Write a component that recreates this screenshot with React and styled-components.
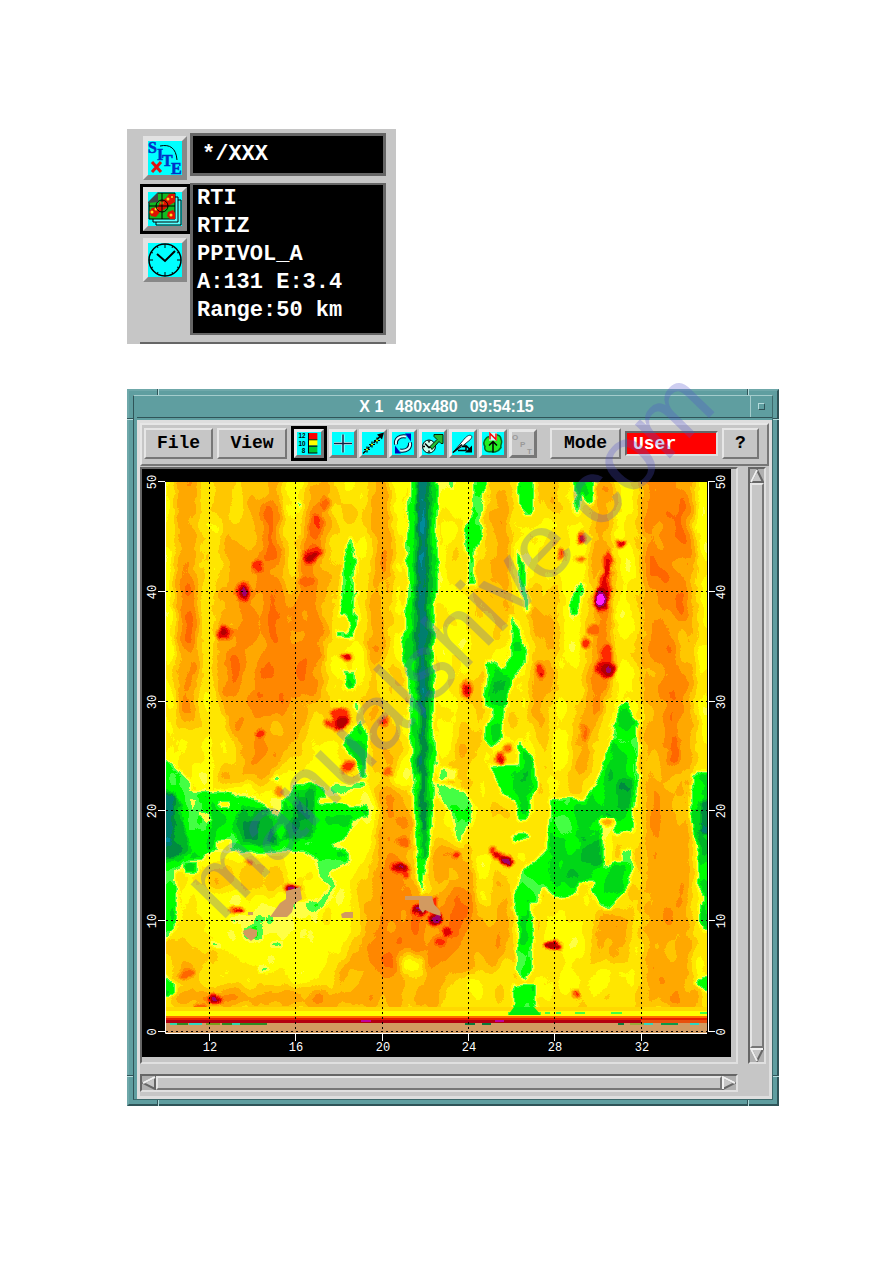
import styled, { createGlobalStyle, css } from 'styled-components';
import { useState } from 'react';

const MONO = '"Liberation Mono", "Courier New", monospace';
const SANS = '"Liberation Sans", Arial, sans-serif';

// radar palette, weakest echo first
const PALETTE = [
    '#008c9c', '#007f70', '#008c40', '#00b428', '#00d818', '#00ff00', '#44ff44',
    '#ffff44', '#ffff00', '#ffe600', '#ffc800', '#ffa800', '#ff8800', '#ff6600',
    '#ff2800', '#e00000', '#b40000', '#a00070', '#ff20ff'
];

const level = (i) => {
    const grey = Math.round((i + 0.5) * 255 / PALETTE.length);
    return `rgb(${grey},${grey},${grey})`;
}

const channel = (offset) => PALETTE.map(c => (parseInt(c.slice(offset, offset + 2), 16) / 255).toFixed(3)).join(' ');

const BANDS = [
    [8, 'M160 470H174V780H160Z'],
    [11, 'M176 470H197L198 620L192 730H180L174 620Z'],
    [12, 'M183 470H194L190 510L192 600H183Z'],
    [12, 'M180 605H198V690H184Z'],
    [9, 'M200 470H214L216 700H200Z'],
    [10, 'M216 470H262V580H216Z'],
    [8, 'M208 520H220V590H206Z'],
    [8, 'M229 500H243V522H229Z'],
    [11, 'M218 580L255 535L268 480H282L284 560L290 600L308 560V480H330L345 560L335 640L322 700L290 745L268 785L250 790L220 780L240 750L215 690Z'],
    [12, 'M266 470H282L280 530L276 600L296 680L285 712L262 720L250 650L230 720L225 650L245 600L262 560Z'],
    [12, 'M306 510L318 500L322 580L322 640L310 690L292 712L286 640L296 590Z'],
    [13, 'M266 505H276L278 560H266Z'],
    [13, 'M231 668H240V690H234ZM256 660H264V700H256Z'],
    [8, 'M285 470H302L298 540H288Z'],
    [9, 'M331 485H364V640L352 720H330Z'],
    [8, 'M325 640H362V675H325Z'],
    [11, 'M368 470H390L391 600L386 660H368Z'],
    [8, 'M393 470H405L402 640L406 700L410 780L402 830H388L398 700Z'],
    [10, 'M368 660H400V760L386 780H370Z'],
    [8, 'M438 470H470V690L450 760H438Z'],
    [10, 'M452 540H464V590H446ZM460 680H476V790H462Z'],
    [11, 'M492 470H512L508 550L512 610L498 640L486 600Z'],
    [8, 'M515 530H540V680L530 740H520L512 640Z'],
    [10, 'M530 580H566L560 680L546 770L530 720Z'],
    [11, 'M540 470H556V510H542Z'],
    [11, 'M530 600H555V680L545 720H528L535 650Z'],
    [8, 'M560 490H585L590 560L580 640L565 760L545 790L560 640Z'],
    [11, 'M594 480H614L612 650L602 700L590 770L570 780L578 720L592 640Z'],
    [12, 'M598 600H612V690L596 720Z'],
    [8, 'M616 470H634V530L630 640L632 700L612 700L618 640Z'],
    [11, 'M640 470H696L694 700L690 1005H640L645 840L642 700Z'],
    [12, 'M650 470H692L690 560L684 620L656 640L644 560Z'],
    [12, 'M664 640H678L680 720L676 770H668L660 720Z'],
    [8, 'M698 470H712V760H698Z'],
    [8, 'M190 760H240L268 795L330 740L345 780L375 800L380 840L350 880L340 940L310 985L230 960L180 900L176 850Z'],
    [10, 'M215 755L240 765L262 785H228Z'],
    [11, 'M222 768H248V782H222Z'],
    [7, 'M245 910H320V935H220Z'],
    [10, 'M200 865H285V890H205Z'],
    [11, 'M380 785L410 790L414 850L424 895L440 840L468 860L505 880L512 920L508 960L470 975L420 995H340L335 975L365 940L375 860Z'],
    [12, 'M385 850L408 862L414 900L450 905L462 870L478 880L470 930L440 960L395 975L370 970L380 910Z'],
    [8, 'M400 955H425V975H400Z'],
    [8, 'M472 855H495V905H478Z'],
    [9, 'M545 905H620L640 940L620 990H545Z'],
    [8, 'M545 912H590L600 940L580 950H545ZM560 970H645L640 990H560Z'],
    [11, 'M596 915H630V960H596Z'],
    [11, 'M176 960H200V980H176Z'],
    [11, 'M170 990H460V1007H170ZM645 985H700V1006H645Z'],
    [12, 'M200 997H235V1005H200ZM280 997H340V1006H280ZM650 1000H698V1006H650Z'],
    [9, 'M440 985H510V1005H440Z']
];

const GREENS = [
    [5, 'M410 475H437L438 560L435 620L433 700L436 760L434 800L430 850L423 892H421L416 850L413 800L411 750L409 700L402 650L407 590L406 540Z'],
    [5, 'M482 475H489L482 510L484 527L475 553L476 585H467L469 560L463 530L472 513L473 475Z'],
    [5, 'M518 475H534V515L526 516L518 504Z'],
    [5, 'M572 475H597L593 505L586 503L581 492L580 507L575 516L572 506L575 494Z'],
    [6, 'M451 475H454V492H451ZM296 502H301V507H296Z'],
    [5, 'M518 548L525 570L530 612H525L518 583Z'],
    [5, 'M582 581L584 585L578 615H571V597Z'],
    [5, 'M510 615L518 623L527 652L526 662L512 680L506 710L501 740L492 747L483 738L485 725L493 711L483 707L487 660H493L502 670L512 655Z'],
    [5, 'M488 764L517 764L520 742L530 752L539 773L533 793L528 820L518 823L516 803L500 790Z'],
    [5, 'M514 834L528 831L530 838L514 843Z'],
    [5, 'M628 699L631 713L639 723V777L632 833H615L612 815L603 816L605 850L603 867L622 860L620 847L634 850L631 883L607 912L590 893L593 882L580 881L577 895L555 898L543 886L541 904L530 903L535 927L530 955L533 970L526 980L516 973L518 927L513 900L520 872L532 863L547 850L551 800L570 794L583 802L597 783L610 740L620 705Z'],
    [5, 'M513 984H534V1003L541 1015H508L514 1003Z'],
    [5, 'M712 771H703L693 775L688 800L693 827L698 860L697 883L704 897L698 920L706 932H712ZM712 973L693 983L712 995Z'],
    [5, 'M350 535L356 553L355 593L356 627L353 638H337V632H347V616L339 615L342 570Z'],
    [5, 'M343 670H355V690L346 688Z'],
    [5, 'M360 720L368 737L367 777H362L352 758L342 747L347 737Z'],
    [5, 'M160 752L176 768L190 778L192 792L212 790L230 793L262 801L277 818L284 800L296 784L310 781L325 788L330 802L366 808L368 816L352 820L345 838L330 846L350 852L348 862L330 872L318 858L290 850L260 856L235 850L205 852L202 860L186 862L176 870L178 900L174 930L160 948Z'],
    [5, 'M160 970L174 983L174 992L160 1000Z'],
    [6, 'M317 860L350 858L343 867L330 872L337 885L330 900L303 919L292 916L293 902L317 902L330 887L318 873Z'],
    [6, 'M330 787L364 781L365 786L330 797Z'],
    [6, 'M440 768L457 770V780H440ZM436 782L466 791L473 808L463 842L458 842L452 808L436 798Z'],
    [6, 'M190 800H210V830H190ZM243 926H262V940H243ZM211 941H222V947H211ZM271 941H281V947H271ZM258 966H268V972H258ZM273 777H279V782H273Z'],
    [6, 'M355 700L362 706L360 714L354 708ZM302 931H306V938H302ZM230 919H236V924H230Z']
];

const DARKS = [
    [3, 'M416 475H431L432 600L430 680L429 760L427 860L422 860L418 780L417 700L413 660L413 600Z'],
    [1, 'M417 475H427L427 580L425 740L424 830H421L420 700L417 600Z'],
    [0, 'M419 500H424L425 590L421 600Z'],
    [3, 'M160 785L180 800L188 850L172 860H160ZM240 806L268 808L280 845H240L232 830ZM295 790H315L312 840H280L292 815Z'],
    [1, 'M160 795H176L172 845H160Z'],
    [2, 'M244 820H258V840H244ZM298 798H309V820H298Z'],
    [4, 'M613 740L633 745V790L625 820H603L606 780ZM555 838L600 826L602 864L582 880H550ZM513 772L532 760L536 788L520 798ZM348 735L364 745V765H355Z'],
    [3, 'M618 780H632V810H618ZM582 838H600V864H576ZM520 770H530V785H522Z'],
    [4, 'M607 868L626 865L622 885L605 895Z'],
    [4, 'M712 785L697 795L694 815L701 855H712ZM492 680H507V705H492Z'],
    [1, 'M712 795L700 805L702 835H712Z'],
    [4, 'M345 560H352V605H344ZM185 864H198V874H185Z'],
    [5, 'M197 820L207 808L212 820L206 826Z'],
    [8, 'M218 802H230V808H218ZM198 812H210V822L204 825ZM216 840H230V850H218ZM270 795L284 805L280 816L272 814Z'],
    [8, 'M600 820L612 818L614 860L606 866ZM320 798H348V803H320Z']
];

// [level, cx, cy, rx, ry]
const CELLS = [
    [14, 243, 592, 8, 10], [17, 243, 592, 4, 5], [14, 225, 633, 8, 7], [16, 225, 633, 4, 4],
    [14, 257, 566, 6, 6], [14, 313, 555, 9, 9], [16, 313, 556, 5, 4], [13, 316, 526, 6, 12],
    [13, 326, 503, 4, 7], [13, 307, 581, 9, 5], [14, 340, 718, 10, 12], [16, 342, 723, 7, 6],
    [14, 328, 724, 7, 3], [15, 347, 657, 6, 4], [14, 347, 767, 7, 6], [13, 270, 672, 4, 8],
    [14, 261, 733, 5, 4], [13, 260, 694, 4, 5], [14, 384, 721, 5, 6], [14, 467, 690, 5, 9],
    [15, 582, 537, 5, 6], [15, 621, 543, 5, 4], [13, 580, 559, 5, 3], [13, 562, 555, 4, 6],
    [15, 607, 563, 5, 14], [15, 605, 585, 5, 12], [16, 601, 599, 9, 13], [18, 600, 599, 6, 8],
    [14, 586, 643, 4, 5], [13, 594, 630, 6, 5], [14, 606, 656, 6, 10], [15, 607, 669, 10, 9],
    [16, 607, 669, 7, 6], [17, 608, 669, 4, 3], [14, 508, 749, 5, 5], [15, 500, 758, 6, 5],
    [13, 585, 732, 5, 10], [14, 540, 671, 5, 7], [14, 492, 850, 4, 6], [15, 498, 856, 6, 4],
    [17, 506, 861, 6, 5], [14, 456, 855, 5, 3], [15, 400, 867, 9, 6], [17, 401, 866, 5, 3],
    [15, 406, 874, 3, 5], [16, 420, 911, 7, 5], [15, 432, 905, 5, 8], [17, 436, 919, 7, 6],
    [15, 447, 932, 5, 6], [14, 440, 942, 6, 4], [16, 237, 910, 8, 3], [14, 292, 889, 8, 6],
    [17, 290, 889, 4, 3], [13, 249, 863, 5, 3], [15, 214, 999, 9, 6], [18, 214, 999, 4, 3],
    [14, 199, 1007, 6, 3], [13, 186, 974, 8, 4], [16, 553, 945, 9, 4], [14, 575, 993, 4, 4],
    [13, 278, 792, 5, 5], [12, 607, 822, 5, 4], [13, 403, 842, 6, 6], [13, 675, 750, 5, 14],
    [13, 388, 772, 5, 5]
];

const NO_ECHO = [
    'M270 917L280 903L286 899V891L300 887L302 899L294 904L292 912L287 917Z',
    'M243 931L250 928L257 930V936L251 941L244 935Z',
    'M341 914L345 912H353V918H342Z',
    'M248 912H253V915H248Z',
    'M405 896H432L434 904L440 911L441 916L434 914L425 910L423 913L419 908V900H405Z'
];

const DASHES = [
    ['#2fd8a8', 170, 7], ['#2e8b22', 177, 11], ['#2fd8c0', 189, 13], ['#7a9e1c', 206, 14], ['#2e8b22', 222, 45],
    ['#2fd8a8', 232, 8], ['#0b7a3a', 465, 10], ['#0b7a3a', 482, 9], ['#0b7a3a', 618, 6], ['#9aa838', 630, 14],
    ['#2fd8c0', 644, 9], ['#0b9a4a', 661, 17], ['#2fd8c0', 690, 9]
];

const X_TICKS = [[12, 209], [16, 295], [20, 382], [24, 468], [28, 554], [32, 641]];
const Y_TICKS = [[50, 482], [40, 592], [30, 702], [20, 811], [10, 921], [0, 1032]];

const RadarPlot = () => (
    <Plot viewBox="142 469 589 588" role="img" aria-label="Range time indicator, RTIZ">
        <defs>
            <clipPath id="plotArea"><rect x="166" y="482" width="541" height="551" /></clipPath>
            <filter id="wide" filterUnits="userSpaceOnUse" x="140" y="460" width="600" height="590"><feGaussianBlur stdDeviation="4 6" /></filter>
            <filter id="narrow" filterUnits="userSpaceOnUse" x="140" y="460" width="600" height="590"><feGaussianBlur stdDeviation="1.5" /></filter>
            <filter id="palette" filterUnits="userSpaceOnUse" x="150" y="470" width="570" height="570" colorInterpolationFilters="sRGB">
                <feTurbulence type="fractalNoise" baseFrequency="0.07" numOctaves="2" seed="7" result="noise" />
                <feDisplacementMap in="SourceGraphic" in2="noise" scale="8" xChannelSelector="R" yChannelSelector="G" result="moved" />
                <feTurbulence type="fractalNoise" baseFrequency="0.045 0.03" numOctaves="2" seed="3" />
                <feColorMatrix values="1 0 0 0 0  1 0 0 0 0  1 0 0 0 0  0 0 0 0 1" result="grain" />
                <feComposite in="moved" in2="grain" operator="arithmetic" k2="1" k3="0.18" k4="-0.09" />
                <feComponentTransfer>
                    <feFuncR type="discrete" tableValues={channel(1)} />
                    <feFuncG type="discrete" tableValues={channel(3)} />
                    <feFuncB type="discrete" tableValues={channel(5)} />
                    <feFuncA type="linear" slope="0" intercept="1" />
                </feComponentTransfer>
                <feGaussianBlur stdDeviation="0.5" />
            </filter>
        </defs>
        <rect x="142" y="469" width="589" height="588" fill="#000" />
        <g clipPath="url(#plotArea)">
            <g filter="url(#palette)">
                <rect x="140" y="460" width="600" height="590" fill={level(9)} />
                <g filter="url(#wide)">
                    {BANDS.map(([l, d]) => <path key={d} d={d} fill={level(l)} />)}
                </g>
                <g filter="url(#narrow)">
                    {GREENS.map(([l, d]) => <path key={d} d={d} fill={level(l)} />)}
                </g>
                <g filter="url(#narrow)">
                    {DARKS.map(([l, d]) => <path key={d} d={d} fill={level(l)} />)}
                    {CELLS.map(([l, x, y, rx, ry]) => <ellipse key={`${l}-${x}-${y}`} cx={x} cy={y} rx={rx} ry={ry} fill={level(l)} />)}
                </g>
            </g>
            {NO_ECHO.map(d => <path key={d} d={d} fill="#d29a60" />)}
            <rect x="166" y="1007" width="541" height="4" fill="#ffd800" />
            <rect x="166" y="1011" width="541" height="5" fill="#ffff00" />
            <path d="M508 1013H541M545 1013H550M556 1013H561M575 1013H585M611 1013H622M700 1013H707" stroke="#44ff44" strokeWidth="2" />
            <path d="M514 1007h20l7 8h-33z" fill="#00ee10" />
            <rect x="166" y="1016" width="541" height="3" fill="#ff7000" />
            <rect x="166" y="1018" width="541" height="2" fill="#e62000" />
            <rect x="166" y="1020" width="475" height="3" fill="#b40010" />
            <rect x="641" y="1020" width="66" height="3" fill="#e8500c" />
            <path d="M361 1021H371M495 1021H504" stroke="#c000a0" strokeWidth="2" />
            <rect x="166" y="1023" width="541" height="10" fill="#d29a60" />
            {DASHES.map(([fill, x, w]) => <rect key={x} x={x} y="1023" width={w} height="2" fill={fill} />)}
            <g stroke="#000" strokeWidth="1" strokeDasharray="2 3">
                {X_TICKS.map(([n, x]) => <path key={n} d={`M${x + 0.5} 482V1032`} />)}
                {Y_TICKS.map(([n, y]) => <path key={n} d={`M166 ${y - 0.5}H707`} />)}
            </g>
        </g>
        <path d="M165.500 482V1033.500H707M708.500 482V1032" fill="none" stroke="#fff" />
        <g stroke="#fff">
            {X_TICKS.map(([n, x]) => <path key={n} d={`M${x + 0.5} 1034V1041`} />)}
            {Y_TICKS.map(([n, y]) => <path key={n} d={`M158 ${y - 0.5}H165M708 ${y - 0.5}H715`} />)}
        </g>
        {X_TICKS.map(([n, x]) => <AxisText key={n} x={x + 1} y="1051">{n}</AxisText>)}
        {Y_TICKS.map(([n, y]) => (
            <g key={n}>
                <AxisText transform={`translate(156 ${y}) rotate(-90)`}>{n}</AxisText>
                <AxisText transform={`translate(725 ${y}) rotate(-90)`}>{n}</AxisText>
            </g>
        ))}
    </Plot>
)

const TOOLS = [
    { name: 'Colour scale', art: <>
        <g fontFamily="Liberation Sans" fontWeight="bold" fontSize="6">
            <text x="1" y="6">12</text><text x="1" y="13">10</text><text x="4" y="20">8</text>
        </g>
        <path d="M11 1h8v6h-8z" fill="#f00" /><path d="M11 7h8v6h-8z" fill="#ff0" /><path d="M11 14h8v6h-8z" fill="#0c3" />
        <path d="M10.500 1v19M10 7.500h9M10 13.500h9M10 20h9" stroke="#000" fill="none" /></> },
    { name: 'Cursor', art: <>
        <path d="M11 2v18M2 11h18" stroke="#cff" strokeWidth="3" />
        <path d="M11 2v18M2 11h18" stroke="#124" strokeWidth="1.500" /></> },
    { name: 'Cross section', art: <>
        <path d="M1 21L19 3" stroke="#000" strokeWidth="1.500" strokeDasharray="4 1" /><path d="M22 0l-7 2 5 5z" />
        <path d="M5 14v6M2 17h6M10 9v6M7 12h6M15 5v6M12 8h6" stroke="#000" strokeWidth="1.200" />
        <path d="M10 11v2M9 12h2M5 16v2M4 17h2M15 7v2M14 8h2" stroke="#cf0" /></> },
    { name: 'Refresh', art: <>
        <path d="M4 12C3 6 8 3 14 4M18 10c1 6-4 9-10 8" fill="none" stroke="#013" strokeWidth="4" />
        <path d="M4 12C3 6 8 3 14 4M18 10c1 6-4 9-10 8" fill="none" stroke="#dff" strokeWidth="2" />
        <path d="M13 1h6v8zM9 21H3v-8z" fill="#00b" /></> },
    { name: 'Auto update', art: <>
        <circle cx="7" cy="14" r="6.500" fill="#cfe" stroke="#000" /><path d="M3 11l4 4 5-2M7 8v2M7 18v2M1 14h2" fill="none" stroke="#000" strokeWidth="1.500" />
        <path d="M8 14l7-7-3-3V2h9v9h-2l-2-2-7 8z" fill="#2b3" stroke="#020" /></> },
    { name: 'Edit', art: <>
        <path d="M1 20L11 8c3-4 6-6 8-5s0 4-3 6l-6 5z" fill="#fff" stroke="#234" />
        <path d="M1 20L10 12M13 12v2h-3M6 18h8v-4M14 13l5 5" fill="none" stroke="#000" strokeWidth="1.500" /><path d="M20 13v7h-7z" /></> },
    { name: 'Overlay map', art: <>
        <path d="M4 6c3-4 5 0 7-1 3-5 8-2 8 2 2 3-1 5 0 8-3 5-8 5-10 4-5 1-7-2-6-5-2-3-1-6 1-8z" fill="#2e2" stroke="#062" strokeWidth="1.500" />
        <path d="M7 0h8v8H7z" fill="#cff" />
        <path d="M11 20V9M7 13l4-4 4 4" fill="none" stroke="#000" strokeWidth="1.500" />
        <path d="M8 7V1l6 6V1" fill="none" stroke="#f00" strokeWidth="1.500" /></> },
    { name: 'Options', grey: true, art: <g fontFamily="Liberation Sans" fontSize="8" fontWeight="bold" fill="#999">
        <text x="0" y="7">O</text><text x="8" y="14">P</text><text x="15" y="21">T</text></g> }
];

const SiteIcon = () => (
    <Art viewBox="0 0 34 34">
        <path d="M12 5c10-2 16 2 17 14" fill="none" stroke="#000" />
        <g fontFamily="Liberation Serif" fontWeight="bold" fontSize="16" fill="#0030c8" stroke="#0030c8" strokeWidth="0.500">
            <text x="0" y="12">S</text><text x="9" y="19">I</text><text x="14" y="25">T</text><text x="23" y="33">E</text>
        </g>
        <path d="M4 21l9 10M13 21L4 31" stroke="#e01010" strokeWidth="3" />
    </Art>
)

const ProductIcon = () => (
    <Art viewBox="0 0 34 34">
        <path d="M8 8h25v25H8z" fill="#5ff" stroke="#000" /><path d="M5 5h25v25H5z" fill="#5ff" stroke="#000" />
        <path d="M1 1h26v26H1z" fill="#1b2" stroke="#000" />
        <path d="M12 10l6-4 3-4h6v8l-5 3-5 4-5 3-4 5-5-1-2-4 3-4 6-1z" fill="#e01000" />
        <path d="M20 20l5-2 2 3v6h-5l-3-3z" fill="#e01000" />
        <g fill="#fd2"><circle cx="14" cy="11" r="1.500" /><circle cx="8" cy="17" r="1.500" /><circle cx="20" cy="7" r="1.500" /><circle cx="23" cy="23" r="1.500" /><circle cx="4" cy="20" r="1.500" /><circle cx="24" cy="5" r="1" /></g>
        <path d="M1 14h26M14 1v26" stroke="#000" /><circle cx="14" cy="14" r="6" fill="none" stroke="#000" />
        <path d="M0 0h10v10L0 11z" fill="#444" /><path d="M0 10L10 0H0z" fill="#0ff" />
    </Art>
)

const ClockIcon = () => (
    <Art viewBox="0 0 34 34">
        <circle cx="17" cy="17" r="16" fill="none" stroke="#000" strokeWidth="1.500" />
        <path d="M17 1v4M17 29v4M1 17h4M29 17h4M9 3l1 2M25 3l-1 2M3 9l2 1M31 9l-2 1M3 25l2-1M31 25l-2-1M9 31l1-2M25 31l-1-2" stroke="#000" />
        <path d="M9 11l8 7 10-10" fill="none" stroke="#000" strokeWidth="2" />
    </Art>
)

const App = () => {

    const [tool, setTool] = useState('Colour scale');
    const [user, setUser] = useState('User');

    return (
        <Page>
            <GlobalStyle />
            <InfoPanel>
                <Selectors>
                    <Choice aria-label="Site"><SiteIcon /></Choice>
                    <Choice aria-label="Product" $active><ProductIcon /></Choice>
                    <Choice aria-label="Time"><ClockIcon /></Choice>
                </Selectors>
                <Readouts>
                    <SiteBox>*/XXX</SiteBox>
                    <ProductBox>
                        <li>RTI</li>
                        <li>RTIZ</li>
                        <li>PPIVOL_A</li>
                        <li>A:131 E:3.4</li>
                        <li>Range:50 km</li>
                    </ProductBox>
                </Readouts>
                <Divider />
            </InfoPanel>

            <Frame>
                <Notch $side="top" $end="left" /><Notch $side="top" $end="right" />
                <Notch $side="bottom" $end="left" /><Notch $side="bottom" $end="right" />
                <SideNotch $side="left" $end="top" /><SideNotch $side="right" $end="top" />
                <SideNotch $side="left" $end="bottom" /><SideNotch $side="right" $end="bottom" />
                <Inner>
                    <TitleBar>
                        <Title><span>X 1</span><span>480x480</span><span>09:54:15</span></Title>
                        <Minimize aria-label="Minimize" />
                    </TitleBar>
                    <Body>
                        <Toolbar>
                            <MenuButton $width={69}>File</MenuButton>
                            <MenuButton $width={70}>View</MenuButton>
                            <Tools>
                                {TOOLS.map(({ name, grey, art }) => (
                                    <Tool
                                        key={name}
                                        aria-label={name}
                                        disabled={grey}
                                        $active={name === tool}
                                        onClick={() => setTool(name)}
                                        >
                                        <ToolArt viewBox="0 0 22 22" $grey={grey}>{art}</ToolArt>
                                    </Tool>
                                ))}
                            </Tools>
                            <MenuButton $width={71}>Mode</MenuButton>
                            <UserField aria-label="User mode" value={user} onChange={e => setUser(e.target.value)} />
                            <MenuButton $width={37}>?</MenuButton>
                        </Toolbar>
                        <View>
                            <Canvas><RadarPlot /></Canvas>
                            <ScrollBar $vertical>
                                <Arrow aria-label="Scroll up"><ArrowArt viewBox="0 0 14 14"><path d="M7 1l6 12H1z" fill="#c6c6c6" /><path d="M7 1L1 13" stroke="#f0f0f0" /></ArrowArt></Arrow>
                                <Thumb />
                                <Arrow aria-label="Scroll down"><ArrowArt viewBox="0 0 14 14"><path d="M1 1h12L7 13z" fill="#c6c6c6" /><path d="M7 13L1 1h12" stroke="#f0f0f0" /></ArrowArt></Arrow>
                            </ScrollBar>
                            <ScrollBar>
                                <Arrow aria-label="Scroll left"><ArrowArt viewBox="0 0 14 14"><path d="M1 7l12-6v12z" fill="#c6c6c6" /><path d="M1 7l12-6" stroke="#f0f0f0" /></ArrowArt></Arrow>
                                <Thumb />
                                <Arrow aria-label="Scroll right"><ArrowArt viewBox="0 0 14 14"><path d="M13 7L1 1v12z" fill="#c6c6c6" /><path d="M1 13V1l12 6" stroke="#f0f0f0" /></ArrowArt></Arrow>
                            </ScrollBar>
                        </View>
                    </Body>
                </Inner>
            </Frame>
            <Watermark>manualshive.com</Watermark>
        </Page>
    );
}

const GlobalStyle = createGlobalStyle`
    * { box-sizing: border-box; }
    body { margin: 0; background: #fff; }
    button, input { font: inherit; margin: 0; padding: 0; border-radius: 0; }
`

const raised = css`
    border-style: solid;
    border-color: #e6e6e6 #777 #777 #e6e6e6;
`
const sunken = css`
    border-style: solid;
    border-color: #666 #e0e0e0 #e0e0e0 #666;
`

const Page = styled.main`
    position: relative;
    min-height: 100vh;
    padding: 129px 114px 40px 127px;
    overflow: hidden;
`
const InfoPanel = styled.section`
    display: grid;
    grid-template-columns: 50px 1fr;
    max-width: 269px;
    padding: 4px 10px 0 13px;
    background: #c6c6c6;
`
const Selectors = styled.div`
    display: flex;
    flex-direction: column;
    gap: 1px;
`
const Choice = styled.button`
    width: 50px;
    height: 50px;
    border: 3px solid ${p => p.$active ? '#000' : 'transparent'};
    background: none;
`
const Art = styled.svg`
    display: block;
    width: 44px;
    height: 44px;
    border-width: 5px;
    background: #0ff;
    ${raised}
    border-color: #e2e2e2 #888 #888 #e2e2e2;
`
const Readouts = styled.div`
    display: flex;
    flex-direction: column;
    gap: 7px;
    color: #fff;
    font: bold 22px/28px ${MONO};
    white-space: pre;
`
const SiteBox = styled.div`
    height: 43px;
    padding: 5px 9px;
    border: 3px solid #666;
    background: #000;
`
const ProductBox = styled.ul`
    margin: 0;
    padding: 0 4px 8px;
    border: 2px solid #666;
    border-width: 2px 3px;
    background: #000;
    list-style: none;
`
const Divider = styled.div`
    grid-column: 1 / -1;
    height: 2px;
    margin-top: 7px;
    background: #666;
`

const Frame = styled.section`
    position: relative;
    margin-top: 45px;
    padding: 4px;
    border: 2px solid;
    border-color: #6fa8aa #2f5458 #2f5458 #6fa8aa;
    background: #5f9ea0;
`
const Notch = styled.i`
    position: absolute;
    ${p => p.$side}: -2px;
    ${p => p.$end}: 28px;
    width: 2px;
    height: 6px;
    border-left: 1px solid #2f5458;
    background: #b4dcdc;
`
const SideNotch = styled.i`
    position: absolute;
    ${p => p.$side}: -2px;
    ${p => p.$end}: 27px;
    width: 6px;
    height: 2px;
    border-top: 1px solid #2f5458;
    background: #b4dcdc;
`
const Inner = styled.div`
    padding-left: 3px;
    border: 1px solid;
    border-color: #a4cccc #3c6a6c #3c6a6c #2f5458;
`
const TitleBar = styled.header`
    display: flex;
    align-items: center;
    height: 22px;
    margin-bottom: 2px;
    padding-left: 6px;
    border-bottom: 1px solid #2f5458;
`
const Title = styled.h1`
    display: flex;
    flex: 1;
    justify-content: center;
    gap: 12px;
    margin: 0;
    color: #fff;
    font: bold 16px/20px ${SANS};
`
const Minimize = styled.button`
    width: 22px;
    height: 21px;
    border: 0;
    border-left: 1px solid #a4cccc;
    background: none;

    &::before {
        content: '';
        display: block;
        width: 5px;
        height: 5px;
        margin: 0 auto;
        border: 1px solid;
        border-color: #b4dcdc #2f5458 #2f5458 #b4dcdc;
    }
`
const Body = styled.div`
    border: 3px solid #dedede;
    background: #c6c6c6;
`
const Toolbar = styled.div`
    display: flex;
    align-items: center;
    gap: 4px;
    height: 43px;
    padding: 0 8px 3px 2px;
    border-width: 2px;
    ${raised}
`
const MenuButton = styled.button`
    width: ${p => p.$width}px;
    height: 31px;
    border-width: 2px;
    background: #c6c6c6;
    color: #000;
    && { font: bold 18px/24px ${MONO}; }
    ${raised}
`
const Tools = styled.div`
    display: flex;
    flex: 1;
    align-items: center;
    gap: 2px;
`
const Tool = styled.button`
    flex: none;
    padding: 0;
    border: 0 solid #000;
    border-width: ${p => p.$active ? '3px' : '0'};
    background: #c6c6c6;

    & > svg { width: ${p => p.$active ? '30px' : '28px'}; }
`
const ToolArt = styled.svg`
    display: block;
    height: 29px;
    border-width: 3px;
    background: ${p => p.$grey ? '#c6c6c6' : '#0ff'};
    ${raised}
`
const UserField = styled.input`
    width: 93px;
    height: 25px;
    padding: 2px 6px 0;
    border-width: 2px;
    background: #f00;
    color: #fff;
    && { font: bold 18px/20px ${MONO}; }
    ${sunken}
`
const View = styled.div`
    display: grid;
    grid-template-columns: minmax(0, 1fr) 18px;
    gap: 10px;
    padding: 1px 3px 4px 0;
`
const Canvas = styled.div`
    padding: 0 5px 5px 0;
    border-width: 2px;
    ${sunken}
`
const Plot = styled.svg`
    display: block;
    width: 100%;
    height: auto;
`
const AxisText = styled.text`
    fill: #fff;
    font: 12px ${MONO};
    text-anchor: middle;
`
const ScrollBar = styled.div`
    display: flex;
    flex-direction: ${p => p.$vertical ? 'column' : 'row'};
    height: ${p => p.$vertical ? 'auto' : '18px'};
    border-width: 2px;
    background: #b0b0b0;
    ${sunken}
`
const Thumb = styled.div`
    flex: 1;
    border-width: 2px;
    background: #c6c6c6;
    ${raised}
`
const Arrow = styled.button`
    width: 14px;
    height: 14px;
    border: 0;
    background: none;
`
const ArrowArt = styled.svg`
    display: block;
    width: 14px;
    height: 14px;
    fill: none;
    stroke: #666;
    stroke-width: 2;
`
const Watermark = styled.div`
    position: absolute;
    top: 643px;
    left: 50%;
    color: rgba(80, 80, 205, 0.28);
    font: 92px/100px ${SANS};
    transform: translate(-50%, -50%) rotate(-46deg);
    pointer-events: none;
`

export default App;
